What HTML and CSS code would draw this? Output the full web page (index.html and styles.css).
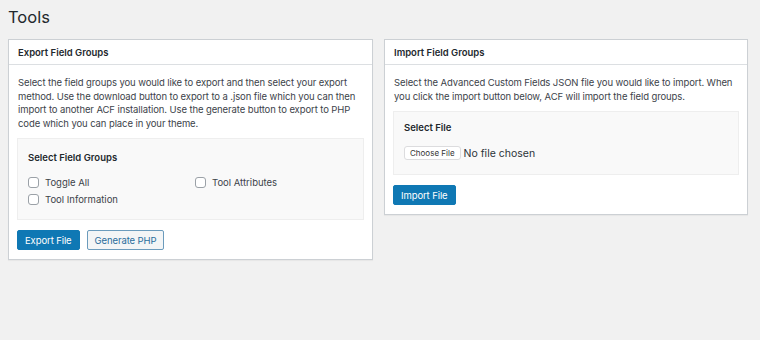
FILE: index.html
```html
<!DOCTYPE html>
<html lang="en">
<head>
    <meta charset="UTF-8">
    <meta name="viewport" content="width=device-width, initial-scale=1.0">
    <title>Tools</title>
    <link rel="stylesheet" href="styles.css">
</head>
<body>

    <div class="wrap">
        <h1 class="page-title">Tools</h1>

        <div class="tool-grid">
            <div class="postbox">
                <h2 class="postbox-title">Export Field Groups</h2>
                <div class="postbox-body">
                    <p>Select the field groups you would like to export and then select your export method. Use the download button to export to a .json file which you can then import to another ACF installation. Use the generate button to export to PHP code which you can place in your theme.</p>
                    <div class="field-box">
                        <div class="field-label">Select Field Groups</div>
                        <ul class="check-list">
                            <li><label><span class="check"></span>Toggle All</label></li>
                            <li><label><span class="check"></span>Tool Information</label></li>
                            <li><label><span class="check"></span>Tool Attributes</label></li>
                        </ul>
                    </div>
                    <div class="actions">
                        <button class="btn btn-primary">Export File</button>
                        <button class="btn btn-secondary">Generate PHP</button>
                    </div>
                </div>
            </div>

            <div class="postbox">
                <h2 class="postbox-title">Import Field Groups</h2>
                <div class="postbox-body">
                    <p>Select the Advanced Custom Fields JSON file you would like to import. When you click the import button below, ACF will import the field groups.</p>
                    <div class="field-box file-box">
                        <div class="field-label">Select File</div>
                        <div class="file-row">
                            <span class="file-btn">Choose File</span>
                            <span class="file-name">No file chosen</span>
                        </div>
                    </div>
                    <div class="actions">
                        <button class="btn btn-primary">Import File</button>
                    </div>
                </div>
            </div>
        </div>
    </div>

</body>
</html>
```

FILE: styles.css
```css
body {
    margin: 0;
    background: #f1f1f1;
    font-family: Inter, "Liberation Sans", sans-serif;
    color: #3c434a;
    height: 100vh;
}
.wrap {
    padding: 0 12px 0 8px;
}
.page-title {
    margin: 0;
    padding: 6px 0 0;
    font-size: 16.5px;
    font-weight: 400;
    line-height: 22px;
    height: 33px;
    color: #23282d;
}
.tool-grid {
    display: grid;
    grid-template-columns: 365px 364px;
    gap: 11px;
    align-items: start;
}
.postbox {
    background: #fff;
    border: 1px solid #ccd0d4;
    box-shadow: 0 1px 1px rgba(0, 0, 0, 0.04);
}
.postbox-title {
    margin: 0;
    height: 24px;
    line-height: 25px;
    padding: 0 9px;
    font-size: 9.5px;
    font-weight: 600;
    color: #23282d;
    border-bottom: 1px solid #dcdfe2;
}
.postbox-body {
    padding: 11px 8px 9px;
}
.postbox-body p {
    margin: 0 1px 8px;
    font-size: 9.5px;
    line-height: 13.6px;
    letter-spacing: -0.1px;
}
.field-box {
    background: #f9f9f9;
    border: 1px solid #eeeeee;
    padding: 12px 10px 11px;
}
.field-label {
    font-size: 9.5px;
    font-weight: 600;
    line-height: 14px;
    margin-bottom: 9px;
    color: #23282d;
}
.check-list {
    list-style: none;
    margin: 0;
    padding: 0;
    column-count: 2;
    column-gap: 9px;
}
.check-list li {
    font-size: 9.5px;
    line-height: 17px;
    height: 17px;
}
.check-list label {
    display: flex;
    align-items: center;
    gap: 6px;
}
.check {
    width: 9px;
    height: 9px;
    border: 1px solid #9ba1a7;
    border-radius: 3px;
    background: #fff;
}
.file-box {
    padding: 9px 10px 14px;
}
.file-box .field-label {
    margin-bottom: 11px;
}
.file-row {
    display: flex;
    align-items: center;
    gap: 3px;
    height: 14px;
}
.file-btn {
    font-size: 8px;
    line-height: 10px;
    padding: 1px 5px;
    background: #fff;
    border: 1px solid #dcdcde;
    border-radius: 3px;
    color: #333;
}
.file-name {
    font-size: 10.5px;
    color: #2c3338;
}
.actions {
    display: flex;
    gap: 7px;
    margin-top: 10px;
}
.btn {
    height: 20px;
    padding: 0 7px;
    font-family: inherit;
    font-size: 9.5px;
    letter-spacing: -0.1px;
    border-radius: 2px;
    border: 1px solid;
}
.btn-primary {
    background: #0f78b4;
    border-color: #0f78b4;
    color: #fff;
}
.btn-secondary {
    background: #f3f5f6;
    border-color: #6b9bbc;
    color: #2a6d9c;
}
```
